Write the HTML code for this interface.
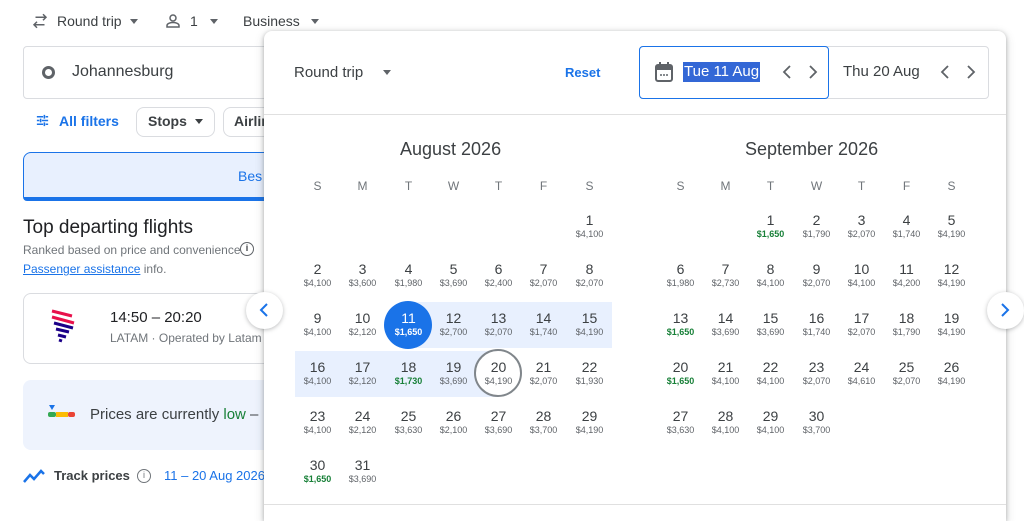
<!DOCTYPE html>
<html><head><meta charset="utf-8"><style>
*{margin:0;padding:0;box-sizing:border-box}
html,body{width:1024px;height:521px;overflow:hidden}
body{background:#fff;font-family:"Liberation Sans",Arial,sans-serif;color:#3c4043;position:relative}
.a{position:absolute;white-space:nowrap}
.c{position:absolute;width:45px;text-align:center;margin-top:2px}
.c b{display:block;font-weight:normal;font-size:14px;line-height:16px;color:#3c4043}
.c i{display:block;font-style:normal;font-size:9px;line-height:12px;color:#5f6368}
.c.g i{color:#188038;font-weight:bold}
.wd{position:absolute;width:45px;text-align:center;font-size:12px;color:#70757a;top:179px}
</style></head><body>
<svg class="a" style="left:31px;top:12px" width="18" height="18" viewBox="0 0 24 24"><path d="M16 3l4 4-4 4M20 7H6M8 21l-4-4 4-4M4 17h14" fill="none" stroke="#5f6368" stroke-width="2"/></svg>
<div class="a" style="left:57px;top:13px;font-size:14px">Round trip</div>
<div class="a" style="left:130px;top:19px;border:4px solid transparent;border-top:5px solid #5f6368"></div>
<svg class="a" style="left:164px;top:12px" width="18" height="18" viewBox="0 0 24 24"><circle cx="12" cy="8" r="4" fill="none" stroke="#5f6368" stroke-width="2"/><path d="M4 20v-2c0-3 5-4 8-4s8 1 8 4v2z" fill="none" stroke="#5f6368" stroke-width="2"/></svg>
<div class="a" style="left:190px;top:13px;font-size:14px">1</div>
<div class="a" style="left:210px;top:19px;border:4px solid transparent;border-top:5px solid #5f6368"></div>
<div class="a" style="left:243px;top:13px;font-size:14px">Business</div>
<div class="a" style="left:311px;top:19px;border:4px solid transparent;border-top:5px solid #5f6368"></div>
<div class="a" style="left:23px;top:46px;width:260px;height:53px;border:1px solid #dadce0;border-radius:4px"></div>
<div class="a" style="left:42px;top:66px;width:13px;height:13px;border:3px solid #5f6368;border-radius:50%"></div>
<div class="a" style="left:72px;top:63px;font-size:16px">Johannesburg</div>
<svg class="a" style="left:35px;top:113px" width="15" height="15" viewBox="0 0 24 24"><path d="M3 6h10M17 6h4M3 12h4M11 12h10M3 18h10M17 18h4M15 3v6M9 9v6M15 15v6" stroke="#1a73e8" stroke-width="2.5" fill="none"/></svg>
<div class="a" style="left:59px;top:113px;font-size:14px;color:#1a73e8;font-weight:bold">All filters</div>
<div class="a" style="left:136px;top:107px;width:79px;height:30px;border:1px solid #dadce0;border-radius:8px"></div>
<div class="a" style="left:148px;top:113px;font-size:14px;font-weight:bold">Stops</div>
<div class="a" style="left:195px;top:119px;border:4px solid transparent;border-top:5px solid #3c4043"></div>
<div class="a" style="left:223px;top:107px;width:60px;height:30px;border:1px solid #dadce0;border-radius:8px"></div>
<div class="a" style="left:234px;top:113px;font-size:14px;font-weight:bold">Airlin</div>
<div class="a" style="left:23px;top:152px;width:260px;height:49px;background:#e8f0fe;border:1px solid #1a73e8;border-bottom:4px solid #1a73e8;border-radius:8px 8px 4px 4px"></div>
<div class="a" style="left:238px;top:168px;font-size:14px;color:#1a73e8">Bes</div>
<div class="a" style="left:23px;top:217px;font-size:19px;color:#202124">Top departing flights</div>
<div class="a" style="left:23px;top:243px;font-size:12px;color:#70757a">Ranked based on price and convenience</div>
<div class="a" style="left:240px;top:242px;width:14px;height:14px;border:1.5px solid #5f6368;border-radius:50%;font-size:9px;text-align:center;line-height:11px;font-weight:bold">i</div>
<div class="a" style="left:23px;top:262px;font-size:12px;color:#70757a"><span style="color:#1a73e8;text-decoration:underline">Passenger assistance</span> info.</div>
<div class="a" style="left:23px;top:293px;width:260px;height:71px;border:1px solid #dadce0;border-radius:8px"></div>
<svg class="a" style="left:50px;top:308px" width="26" height="36" viewBox="0 0 26 36"><path d="M2 3l20 5M2 9l22 6" stroke="#e8114b" stroke-width="3"/><path d="M4 15l19 5M6 21l13 3M8 27l8 2M9 32l3 1" stroke="#1b0088" stroke-width="3"/></svg>
<div class="a" style="left:110px;top:309px;font-size:15px;color:#202124">14:50 – 20:20</div>
<div class="a" style="left:110px;top:331px;font-size:12px;color:#70757a">LATAM · Operated by Latam A</div>
<div class="a" style="left:23px;top:380px;width:260px;height:70px;background:#eef3fd;border-radius:8px"></div>
<div class="a" style="left:49px;top:405px;border:3px solid transparent;border-top:5px solid #1a73e8"></div>
<div class="a" style="left:48px;top:412px;width:8px;height:5px;background:#34a853;border-radius:2px"></div>
<div class="a" style="left:56px;top:412px;width:12px;height:5px;background:#fbbc04"></div>
<div class="a" style="left:68px;top:412px;width:7px;height:5px;background:#ea4335;border-radius:2px"></div>
<div class="a" style="left:90px;top:406px;font-size:15px">Prices are currently <span style="color:#188038">low</span> –</div>
<svg class="a" style="left:23px;top:468px" width="22" height="16" viewBox="0 0 22 16"><path d="M1 14l6-7 4 4 7-8 3 3" stroke="#1a73e8" stroke-width="2.5" fill="none"/></svg>
<div class="a" style="left:54px;top:468px;font-size:13px;font-weight:bold">Track prices</div>
<div class="a" style="left:137px;top:469px;width:14px;height:14px;border:1.5px solid #70757a;border-radius:50%;font-size:9px;text-align:center;line-height:11px;color:#70757a">i</div>
<div class="a" style="left:164px;top:468px;font-size:13px;color:#1a73e8">11 – 20 Aug 2026</div>

<div class="a" style="left:264px;top:31px;width:742px;height:490px;background:#fff;border-radius:8px 8px 0 0;box-shadow:0 1px 4px rgba(60,64,67,.35),0 3px 10px rgba(60,64,67,.2)"></div>
<div class="a" style="left:264px;top:114px;width:742px;height:1px;background:#e0e0e0"></div>
<div class="a" style="left:264px;top:504px;width:742px;height:1px;background:#e0e0e0"></div>
<div class="a" style="left:294px;top:64px;font-size:15px">Round trip</div>
<div class="a" style="left:383px;top:70px;border:4px solid transparent;border-top:5px solid #5f6368"></div>
<div class="a" style="left:565px;top:65px;font-size:13px;color:#1a73e8;font-weight:bold">Reset</div>
<div class="a" style="left:639px;top:46px;width:350px;height:53px;border:1px solid #dadce0;border-radius:4px"></div>
<div class="a" style="left:639px;top:46px;width:190px;height:53px;border:1.5px solid #1a73e8;border-radius:4px"></div>
<svg class="a" style="left:654px;top:61px" width="20" height="22" viewBox="0 0 20 22"><rect x="2" y="4" width="16" height="16" rx="2" fill="none" stroke="#5f6368" stroke-width="2"/><rect x="2" y="4" width="16" height="5" fill="#5f6368"/><path d="M6 1v4M14 1v4" stroke="#5f6368" stroke-width="2"/><path d="M6 14h2M9 14h2M12 14h2" stroke="#5f6368" stroke-width="1.5"/></svg>
<div class="a" style="left:683px;top:62px;font-size:15px;background:#3367d6;color:#fff;padding:1px 1px;line-height:18px">Tue 11 Aug</div>
<svg class="a" style="left:779px;top:64px" width="44" height="16" viewBox="0 0 44 16"><path d="M11 2L5 8l6 6M31 2l6 6-6 6" stroke="#5f6368" stroke-width="1.8" fill="none"/></svg>
<div class="a" style="left:843px;top:63px;font-size:15px">Thu 20 Aug</div>
<svg class="a" style="left:937px;top:64px" width="44" height="16" viewBox="0 0 44 16"><path d="M11 2L5 8l6 6M31 2l6 6-6 6" stroke="#5f6368" stroke-width="1.8" fill="none"/></svg>

<div class="a" style="left:400px;top:139px;font-size:18px;color:#3c4043">August 2026</div>
<div class="a" style="left:745px;top:139px;font-size:18px;color:#3c4043">September 2026</div>
<div class="wd" style="left:295px">S</div><div class="wd" style="left:340px">M</div><div class="wd" style="left:386px">T</div><div class="wd" style="left:431px">W</div><div class="wd" style="left:476px">T</div><div class="wd" style="left:521px">F</div><div class="wd" style="left:567px">S</div>
<div class="wd" style="left:658px">S</div><div class="wd" style="left:703px">M</div><div class="wd" style="left:748px">T</div><div class="wd" style="left:794px">W</div><div class="wd" style="left:839px">T</div><div class="wd" style="left:884px">F</div><div class="wd" style="left:929px">S</div>

<div class="a" style="left:408px;top:302px;width:204px;height:46px;background:#e8f0fe"></div>
<div class="a" style="left:295px;top:351px;width:203px;height:46px;background:#e8f0fe"></div>
<div class="a" style="left:384px;top:301px;width:48px;height:48px;border-radius:50%;background:#1a73e8"></div>
<div class="a" style="left:474px;top:349px;width:48px;height:48px;border-radius:50%;background:#fff;border:2px solid #80868b"></div>

<div class="c" style="left:567px;top:210px"><b>1</b><i>$4,100</i></div>
<div class="c" style="left:295px;top:259px"><b>2</b><i>$4,100</i></div>
<div class="c" style="left:340px;top:259px"><b>3</b><i>$3,600</i></div>
<div class="c" style="left:386px;top:259px"><b>4</b><i>$1,980</i></div>
<div class="c" style="left:431px;top:259px"><b>5</b><i>$3,690</i></div>
<div class="c" style="left:476px;top:259px"><b>6</b><i>$2,400</i></div>
<div class="c" style="left:521px;top:259px"><b>7</b><i>$2,070</i></div>
<div class="c" style="left:567px;top:259px"><b>8</b><i>$2,070</i></div>
<div class="c" style="left:295px;top:308px"><b>9</b><i>$4,100</i></div>
<div class="c" style="left:340px;top:308px"><b>10</b><i>$2,120</i></div>
<div class="c" style="left:386px;top:308px"><b style="color:#fff">11</b><i style="color:#fff;font-weight:bold">$1,650</i></div>
<div class="c" style="left:431px;top:308px"><b>12</b><i>$2,700</i></div>
<div class="c" style="left:476px;top:308px"><b>13</b><i>$2,070</i></div>
<div class="c" style="left:521px;top:308px"><b>14</b><i>$1,740</i></div>
<div class="c" style="left:567px;top:308px"><b>15</b><i>$4,190</i></div>
<div class="c" style="left:295px;top:357px"><b>16</b><i>$4,100</i></div>
<div class="c" style="left:340px;top:357px"><b>17</b><i>$2,120</i></div>
<div class="c g" style="left:386px;top:357px"><b>18</b><i>$1,730</i></div>
<div class="c" style="left:431px;top:357px"><b>19</b><i>$3,690</i></div>
<div class="c" style="left:476px;top:357px"><b>20</b><i>$4,190</i></div>
<div class="c" style="left:521px;top:357px"><b>21</b><i>$2,070</i></div>
<div class="c" style="left:567px;top:357px"><b>22</b><i>$1,930</i></div>
<div class="c" style="left:295px;top:406px"><b>23</b><i>$4,100</i></div>
<div class="c" style="left:340px;top:406px"><b>24</b><i>$2,120</i></div>
<div class="c" style="left:386px;top:406px"><b>25</b><i>$3,630</i></div>
<div class="c" style="left:431px;top:406px"><b>26</b><i>$2,100</i></div>
<div class="c" style="left:476px;top:406px"><b>27</b><i>$3,690</i></div>
<div class="c" style="left:521px;top:406px"><b>28</b><i>$3,700</i></div>
<div class="c" style="left:567px;top:406px"><b>29</b><i>$4,190</i></div>
<div class="c g" style="left:295px;top:455px"><b>30</b><i>$1,650</i></div>
<div class="c" style="left:340px;top:455px"><b>31</b><i>$3,690</i></div>

<div class="c g" style="left:748px;top:210px"><b>1</b><i>$1,650</i></div>
<div class="c" style="left:794px;top:210px"><b>2</b><i>$1,790</i></div>
<div class="c" style="left:839px;top:210px"><b>3</b><i>$2,070</i></div>
<div class="c" style="left:884px;top:210px"><b>4</b><i>$1,740</i></div>
<div class="c" style="left:929px;top:210px"><b>5</b><i>$4,190</i></div>
<div class="c" style="left:658px;top:259px"><b>6</b><i>$1,980</i></div>
<div class="c" style="left:703px;top:259px"><b>7</b><i>$2,730</i></div>
<div class="c" style="left:748px;top:259px"><b>8</b><i>$4,100</i></div>
<div class="c" style="left:794px;top:259px"><b>9</b><i>$2,070</i></div>
<div class="c" style="left:839px;top:259px"><b>10</b><i>$4,100</i></div>
<div class="c" style="left:884px;top:259px"><b>11</b><i>$4,200</i></div>
<div class="c" style="left:929px;top:259px"><b>12</b><i>$4,190</i></div>
<div class="c g" style="left:658px;top:308px"><b>13</b><i>$1,650</i></div>
<div class="c" style="left:703px;top:308px"><b>14</b><i>$3,690</i></div>
<div class="c" style="left:748px;top:308px"><b>15</b><i>$3,690</i></div>
<div class="c" style="left:794px;top:308px"><b>16</b><i>$1,740</i></div>
<div class="c" style="left:839px;top:308px"><b>17</b><i>$2,070</i></div>
<div class="c" style="left:884px;top:308px"><b>18</b><i>$1,790</i></div>
<div class="c" style="left:929px;top:308px"><b>19</b><i>$4,190</i></div>
<div class="c g" style="left:658px;top:357px"><b>20</b><i>$1,650</i></div>
<div class="c" style="left:703px;top:357px"><b>21</b><i>$4,100</i></div>
<div class="c" style="left:748px;top:357px"><b>22</b><i>$4,100</i></div>
<div class="c" style="left:794px;top:357px"><b>23</b><i>$2,070</i></div>
<div class="c" style="left:839px;top:357px"><b>24</b><i>$4,610</i></div>
<div class="c" style="left:884px;top:357px"><b>25</b><i>$2,070</i></div>
<div class="c" style="left:929px;top:357px"><b>26</b><i>$4,190</i></div>
<div class="c" style="left:658px;top:406px"><b>27</b><i>$3,630</i></div>
<div class="c" style="left:703px;top:406px"><b>28</b><i>$4,100</i></div>
<div class="c" style="left:748px;top:406px"><b>29</b><i>$4,100</i></div>
<div class="c" style="left:794px;top:406px"><b>30</b><i>$3,700</i></div>

<div class="a" style="left:246px;top:292px;width:37px;height:37px;border-radius:50%;background:#fff;box-shadow:0 1px 4px rgba(60,64,67,.35)"></div>
<svg class="a" style="left:256px;top:302px" width="16" height="16" viewBox="0 0 16 16"><path d="M11 2L5 8l6 6" stroke="#1a73e8" stroke-width="2" fill="none"/></svg>
<div class="a" style="left:987px;top:292px;width:37px;height:37px;border-radius:50%;background:#fff;box-shadow:0 1px 4px rgba(60,64,67,.35)"></div>
<svg class="a" style="left:997px;top:302px" width="16" height="16" viewBox="0 0 16 16"><path d="M5 2l6 6-6 6" stroke="#1a73e8" stroke-width="2" fill="none"/></svg>
</body></html>
